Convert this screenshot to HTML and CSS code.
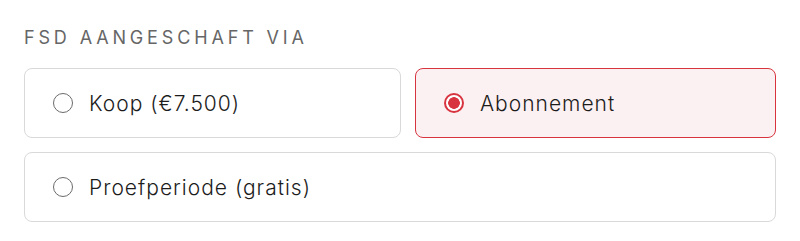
FILE: index.html
```html
<!DOCTYPE html>
<html lang="nl">
<head>
<meta charset="utf-8">
<link rel="stylesheet" href="styles.css">
</head>
<body>
<div class="field">
  <div class="label">FSD aangeschaft via</div>
  <div class="options">
    <label class="option">
      <span class="radio"></span>
      <span class="text">Koop (€7.500)</span>
    </label>
    <label class="option selected">
      <span class="radio"></span>
      <span class="text">Abonnement</span>
    </label>
    <label class="option">
      <span class="radio"></span>
      <span class="text">Proefperiode (gratis)</span>
    </label>
  </div>
</div>
</body>
</html>
```
FILE: styles.css
```css
html, body {
  margin: 0;
  padding: 0;
  background: #ffffff;
}
body {
  font-family: "Inter", "Noto Sans", sans-serif;
  color: #1c1c1c;
}
.field {
  padding: 26px 24px 0 24px;
}
.label {
  font-size: 18px;
  line-height: 24px;
  letter-spacing: 3.85px;
  text-transform: uppercase;
  color: #666666;
  margin-bottom: 18px;
}
.options {
  display: flex;
  flex-wrap: wrap;
  gap: 14px;
}
.option {
  flex: 1 1 auto;
  box-sizing: border-box;
  height: 70px;
  display: flex;
  align-items: center;
  gap: 16px;
  padding: 0 28px;
  border: 1px solid #d9d9d9;
  border-radius: 8px;
  background: #ffffff;
  font-size: 21px;
  font-weight: 350;
  letter-spacing: 1px;
}
.option:last-child {
  flex-basis: 100%;
}
.radio {
  flex: none;
  box-sizing: border-box;
  width: 20px;
  height: 20px;
  border-radius: 50%;
  border: 1.5px solid #6b6b6b;
  background: #fff;
}
.option.selected {
  border-color: #d8343f;
  background: #fcf1f2;
}
.option.selected .radio {
  border: 2px solid #d8343f;
  background: radial-gradient(circle, #d8343f 0 5.5px, #ffffff 6.1px);
}
```
